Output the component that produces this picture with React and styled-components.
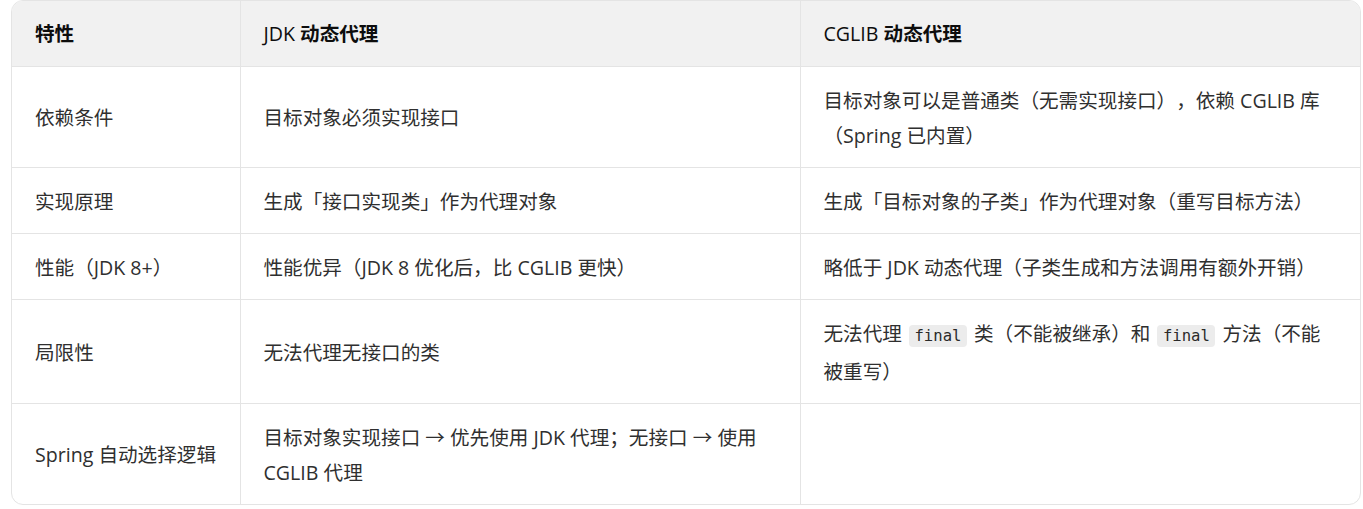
import React from "react";
import styled, { createGlobalStyle } from "styled-components";

const Global = createGlobalStyle`
  html, body { margin: 0; padding: 0; background: #ffffff; }
  body {
    font-family: "Segoe UI", "Open Sans", "Noto Sans CJK SC", sans-serif;
    -webkit-font-smoothing: antialiased;
    text-spacing-trim: space-all;
  }
`;

const Page = styled.div`
  padding: 0 3px 0 11px;
`;

const Frame = styled.div`
  width: 1350px;
  box-sizing: border-box;
  border: 1px solid #e4e4e4;
  border-radius: 12px;
  overflow: hidden;
`;

const Table = styled.table`
  width: 100%;
  border-collapse: collapse;
  table-layout: fixed;
  font-size: 19.6px;
  line-height: 34.5px;
  text-spacing-trim: space-all;
`;

const HeadCell = styled.th`
  background: #f1f1f1;
  color: #0d0d0d;
  font-weight: 700;
  text-align: left;
  padding: 16px 23px 14.5px;
  border-bottom: 1px solid #e4e4e4;
  border-right: 1px solid #e4e4e4;
  &:last-child { border-right: none; }
`;

const Latin = styled.span`
  font-weight: ${(p) => (p.$light ? 500 : 700)};
`;

const Row = styled.tr`
  &:last-child td { border-bottom: none; }
`;

const Cell = styled.td`
  color: #2f2f2f;
  padding: 17px 23px 13.5px;
  vertical-align: middle;
  border-bottom: 1px solid #e4e4e4;
  border-right: 1px solid #e4e4e4;
  &:last-child { border-right: none; }
`;

const Code = styled.code`
  font-family: "DejaVu Sans Mono", "Liberation Mono", monospace;
  font-size: 15.6px;
  line-height: 37.5px;
  background: #ececec;
  color: #2a2a2a;
  border-radius: 4px;
  padding: 2px 5.5px;
  margin: 0 2px;
`;

const rows = [
  ["依赖条件", "目标对象必须实现接口", "目标对象可以是普通类（无需实现接口），依赖 CGLIB 库（Spring 已内置）"],
  ["实现原理", "生成「接口实现类」作为代理对象", "生成「目标对象的子类」作为代理对象（重写目标方法）"],
  ["性能（JDK 8+）", "性能优异（JDK 8 优化后，比 CGLIB 更快）", "略低于 JDK 动态代理（子类生成和方法调用有额外开销）"],
  [
    "局限性",
    "无法代理无接口的类",
    <>无法代理 <Code>final</Code> 类（不能被继承）和 <Code>final</Code> 方法（不能被重写）</>,
  ],
  ["Spring 自动选择逻辑", "目标对象实现接口 → 优先使用 JDK 代理；无接口 → 使用 CGLIB 代理", ""],
];

export default function App() {
  return (
    <>
      <Global />
      <Page>
        <Frame>
          <Table>
            <colgroup>
              <col style={{ width: "228px" }} />
              <col style={{ width: "560px" }} />
              <col />
            </colgroup>
            <thead>
              <tr>
                <HeadCell>特性</HeadCell>
                <HeadCell><Latin $light>JDK</Latin> 动态代理</HeadCell>
                <HeadCell><Latin $light>CGLIB</Latin> 动态代理</HeadCell>
              </tr>
            </thead>
            <tbody>
              {rows.map((r, i) => (
                <Row key={i}>
                  <Cell>{r[0]}</Cell>
                  <Cell>{r[1]}</Cell>
                  <Cell>{r[2]}</Cell>
                </Row>
              ))}
            </tbody>
          </Table>
        </Frame>
      </Page>
    </>
  );
}
